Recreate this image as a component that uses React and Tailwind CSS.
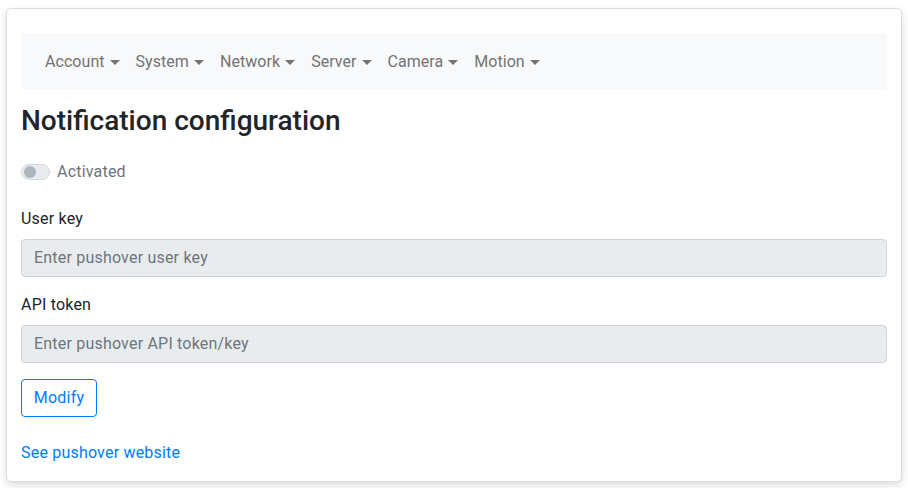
import React from 'react';

const font = { fontFamily: 'Roboto, "Liberation Sans", sans-serif' };

const menus = ['Account', 'System', 'Network', 'Server', 'Camera', 'Motion'];

function NavItem({ label }) {
    return (
        <a className="flex items-center px-2 py-2 text-[16px] leading-6 tracking-[0.05px] text-[#737373] cursor-pointer">
            {label}
            {/* caret */}
            <span className="ml-[5px] mt-[1px] w-0 h-0 border-t-[5px] border-t-[#737373] border-x-[5px] border-x-transparent" />
        </a>
    );
}

export default function App() {
    return (
        <div className="min-h-[488px] bg-white pt-[8px] pl-[6px]" style={font}>
            <div className="w-[896px] h-[474px] bg-white border border-[#dcdcdc] rounded-[5px] shadow-[0_3px_9px_rgba(0,0,0,0.14)] px-[14px] pt-[24px]">
                {/* Navbar */}
                <nav className="flex items-center h-[56px] bg-[#f8f9fa] px-4 pt-[1px]">
                    {menus.map((m) => (
                        <NavItem key={m} label={m} />
                    ))}
                </nav>

                <h3 className="mt-[15px] mb-[8px] text-[28px] leading-[34px] font-medium text-[#212529]">
                    Notification configuration
                </h3>

                {/* Switch */}
                <div className="flex items-center h-6 mt-[22px] mb-[23px]">
                    <span className="relative w-[29px] h-[16px] rounded-full bg-[#e9ecef] border border-[#d5d9dd]">
                        <span className="absolute left-[2px] top-[1px] w-[12px] h-[12px] rounded-full bg-[#adb5bd]" />
                    </span>
                    <span className="ml-[7px] text-[16px] leading-6 tracking-[0.2px] text-[#6c757d]">Activated</span>
                </div>

                <div className="mb-4">
                    <label className="block mb-2 text-[16px] leading-6 tracking-[0.2px] text-[#212529]">User key</label>
                    <div className="h-[38px] flex items-center px-3 bg-[#e9ecef] border border-[#ced4da] rounded-[4px] text-[16px] tracking-[0.2px] text-[#6c757d]">
                        Enter pushover user key
                    </div>
                </div>

                <div className="mb-4">
                    <label className="block mb-2 text-[16px] leading-6 tracking-[0.2px] text-[#212529]">API token</label>
                    <div className="h-[38px] flex items-center px-3 bg-[#e9ecef] border border-[#ced4da] rounded-[4px] text-[16px] tracking-[0.2px] text-[#6c757d]">
                        Enter pushover API token/key
                    </div>
                </div>

                <button className="h-[38px] w-[76px] border border-[#007bff] rounded-[4px] text-[16px] leading-6 tracking-[0.2px] text-[#007bff] bg-white">
                    Modify
                </button>

                <div className="mt-[24px]">
                    <a className="text-[16px] leading-6 tracking-[0.2px] text-[#007bff] cursor-pointer">See pushover website</a>
                </div>
            </div>
        </div>
    );
}
